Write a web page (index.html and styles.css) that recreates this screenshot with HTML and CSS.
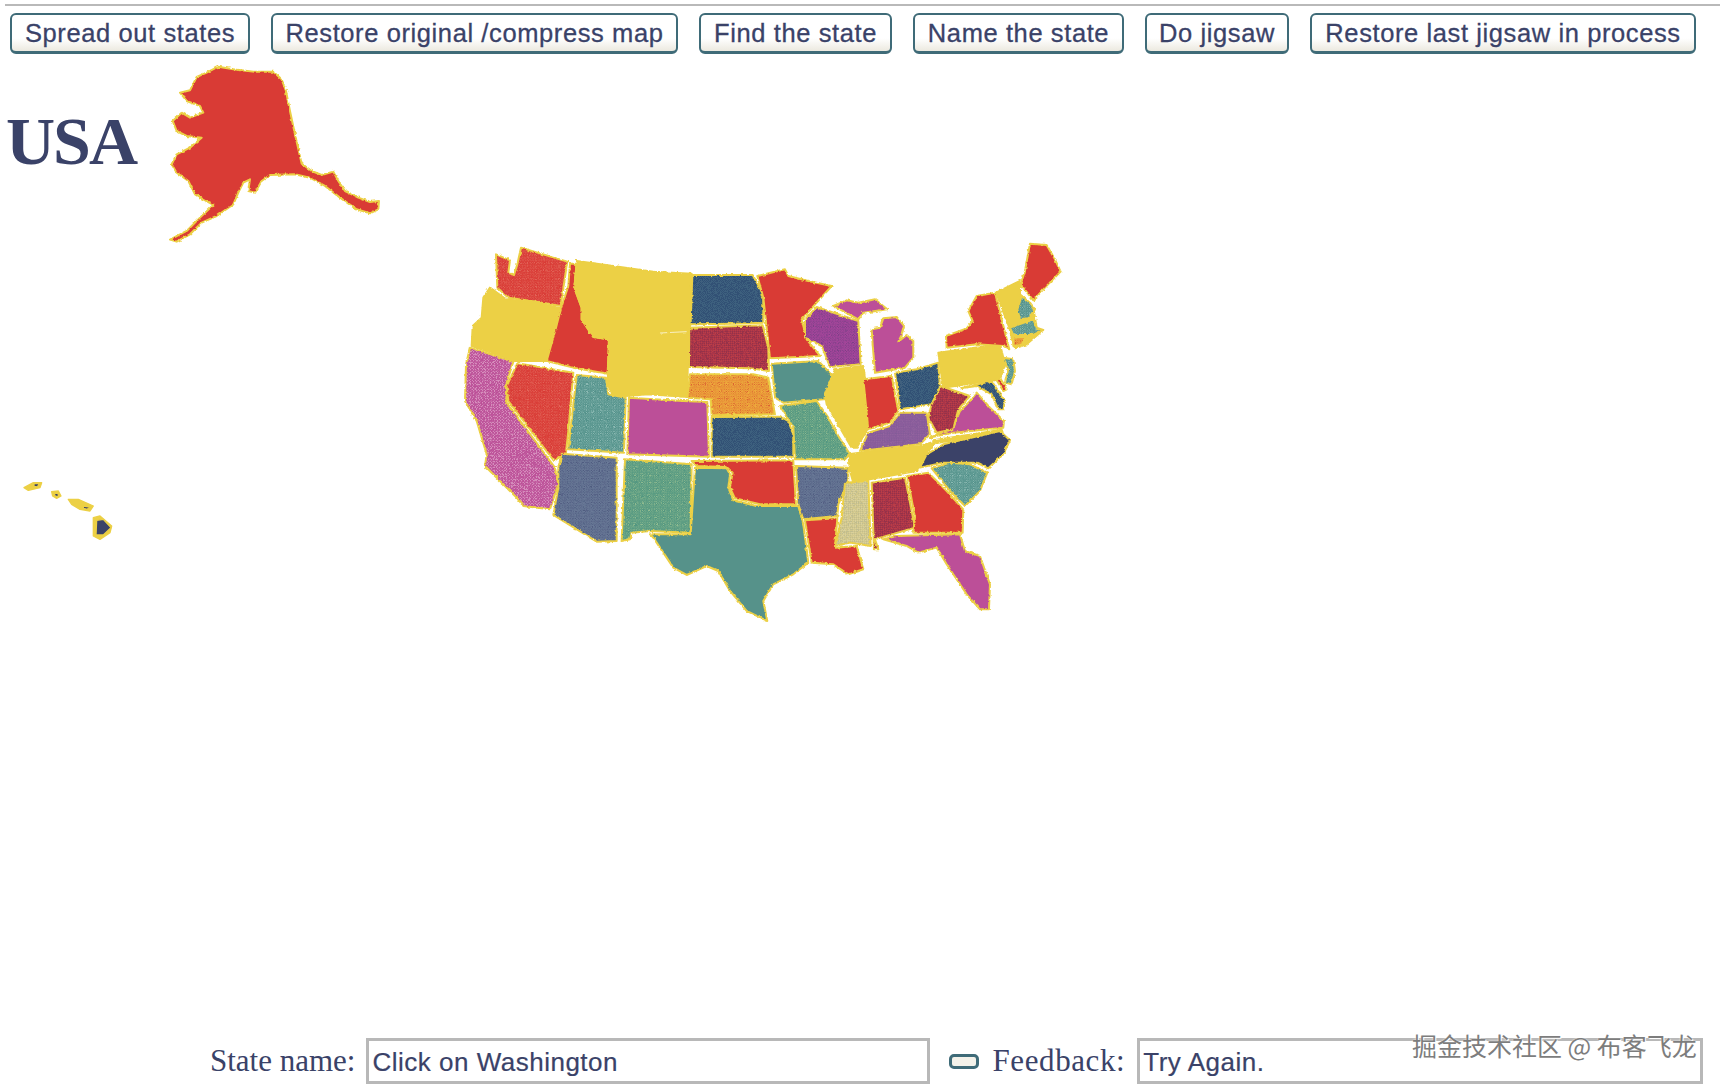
FILE: index.html
```html
<!DOCTYPE html>
<html lang="en">
<head>
    <meta charset="UTF-8">
    <meta name="viewport" content="width=device-width, initial-scale=1.0">
    <title>USA Map Game</title>
    <link rel="stylesheet" href="styles.css">
</head>
<body>
    <div class="page">
        <hr class="top-rule">

        <!-- Game buttons -->
        <div class="toolbar">
            <button class="btn btn-spread">Spread out states</button>
            <button class="btn btn-restore">Restore original /compress map</button>
            <button class="btn btn-find">Find the state</button>
            <button class="btn btn-name">Name the state</button>
            <button class="btn btn-jigsaw">Do jigsaw</button>
            <button class="btn btn-last">Restore last jigsaw in process</button>
        </div>

        <!-- Map canvas: the viewBox uses page coordinates -->
        <div class="stage">
            <h1 class="title">USA</h1>
            <svg class="map" viewBox="0 60 1725 975" width="1725" height="975">
                <defs>
                    <filter id="rough">
                        <feTurbulence type="fractalNoise" baseFrequency="0.1" numOctaves="2" seed="4"/>
                        <feDisplacementMap in="SourceGraphic" scale="9" xChannelSelector="R" yChannelSelector="G"/>
                    </filter>
                    <pattern id="dot-red" width="8" height="8" patternUnits="userSpaceOnUse">
                        <rect width="8" height="8" fill="#d93a35"/>
                        <circle cx="2" cy="2" r="1.3" fill="#f2a890"/><circle cx="6" cy="6" r="1.3" fill="#f2a890"/>
                    </pattern>
                    <pattern id="dot-magenta" width="9" height="9" patternUnits="userSpaceOnUse">
                        <rect width="9" height="9" fill="#bc5098"/>
                        <circle cx="2" cy="2" r="1.5" fill="#f4d2e6"/><circle cx="6.5" cy="6.5" r="1.5" fill="#f4d2e6"/>
                    </pattern>
                    <pattern id="dot-teal" width="7" height="7" patternUnits="userSpaceOnUse">
                        <rect width="7" height="7" fill="#4f8f88"/>
                        <circle cx="2" cy="2" r="1.3" fill="#b5d6cf"/><circle cx="5.5" cy="5.5" r="1.3" fill="#b5d6cf"/>
                    </pattern>
                    <pattern id="dot-blue" width="6" height="6" patternUnits="userSpaceOnUse">
                        <rect width="6" height="6" fill="#2f5075"/>
                        <circle cx="1.5" cy="1.5" r="1.1" fill="#6d9296"/><circle cx="4.5" cy="4.5" r="1.1" fill="#6d9296"/>
                    </pattern>
                    <pattern id="dot-darkred" width="6" height="6" patternUnits="userSpaceOnUse">
                        <rect width="6" height="6" fill="#a93448"/>
                        <circle cx="1.5" cy="1.5" r="1.2" fill="#7a2c4c"/><circle cx="4.5" cy="4.5" r="1.2" fill="#d24a45"/>
                    </pattern>
                    <pattern id="dot-orange" width="7" height="7" patternUnits="userSpaceOnUse">
                        <rect width="7" height="7" fill="#f0b23c"/>
                        <circle cx="2" cy="2" r="1.6" fill="#d8502f"/><circle cx="5.5" cy="5.5" r="1.6" fill="#d8502f"/>
                    </pattern>
                    <pattern id="dot-slate" width="8" height="8" patternUnits="userSpaceOnUse">
                        <rect width="8" height="8" fill="#6a7a98"/>
                        <circle cx="2" cy="2" r="1.5" fill="#37406a"/><circle cx="6" cy="6" r="1.5" fill="#37406a"/>
                    </pattern>
                    <pattern id="dot-green" width="7" height="7" patternUnits="userSpaceOnUse">
                        <rect width="7" height="7" fill="#4f9580"/>
                        <circle cx="2" cy="2" r="1.3" fill="#b9d39a"/><circle cx="5.5" cy="5.5" r="1.3" fill="#b9d39a"/>
                    </pattern>
                    <pattern id="dot-purple" width="8" height="8" patternUnits="userSpaceOnUse">
                        <rect width="8" height="8" fill="#a8459c"/>
                        <circle cx="2" cy="2" r="1.4" fill="#4a3a70"/><circle cx="6" cy="6" r="1.4" fill="#4a3a70"/>
                    </pattern>
                    <pattern id="dot-violet" width="7" height="7" patternUnits="userSpaceOnUse">
                        <rect width="7" height="7" fill="#8a5b9b"/>
                        <circle cx="2" cy="2" r="1.1" fill="#b58fb2"/><circle cx="5.5" cy="5.5" r="1.1" fill="#6f5f90"/>
                    </pattern>
                    <pattern id="dot-beige" width="6" height="6" patternUnits="userSpaceOnUse">
                        <rect width="6" height="6" fill="#d2c88c"/>
                        <circle cx="1.5" cy="1.5" r="1.1" fill="#8f9d98"/><circle cx="4.5" cy="4.5" r="1.1" fill="#f0ead0"/>
                    </pattern>
                </defs>

                <!-- Alaska -->
                <g class="states" transform="scale(.3333)" filter="url(#rough)">
                    <path class="red" d="M655 197L700 205L760 212L820 212L845 235L858 270L870 330L885 400L905 488L935 510L965 522L1000 512L1015 540L1035 570L1075 590L1110 603L1137 600L1135 625L1110 637L1070 625L1020 590L975 555L930 530L885 520L810 522L785 540L765 575L745 570L750 535L730 545L715 575L700 610L650 645L605 665L570 700L530 722L510 716L560 690L600 650L640 612L610 595L585 580L565 540L530 515L515 490L530 460L570 440L605 410L560 405L530 390L518 360L545 335L570 350L610 335L600 315L560 300L540 275L570 268L590 228L620 215Z"/>
                </g>

                <!-- Hawaii -->
                <g class="states hawaii" transform="translate(0 460) scale(.3333)">
                    <path class="yellow" d="M72 80L100 65L125 65L120 80L85 88Z"/>
                    <path class="navy" d="M102 68L118 68L112 78L102 76Z"/>
                    <path class="yellow" d="M155 92L175 90L183 105L170 112L158 105Z"/>
                    <path class="navy" d="M162 97L174 97L176 106L166 106Z"/>
                    <path class="yellow" d="M205 115L235 115L280 135L270 150L240 145L215 130Z"/>
                    <path class="navy" d="M250 135L270 138L262 145L250 142Z"/>
                    <path class="yellow" d="M280 170L300 165L335 195L330 215L300 235L280 225Z"/>
                    <path class="navy" d="M290 178L310 175L333 200L310 222L288 222Z"/>
                </g>

                <!-- Western states -->
                <g class="states" transform="translate(440 230) scale(.3333)" filter="url(#rough)">
                    <path fill="url(#dot-red)" d="M168 70L210 88L205 125L222 132L232 100L243 50L382 92L362 225L290 212L205 200L172 170Z"/>
                    <path class="yellow" d="M150 170L198 205L290 215L362 232L345 290L320 390L225 390L95 345L98 285L125 260L130 200Z"/>
                    <path class="red" d="M390 98L410 98L403 170L425 230L425 265L460 318L507 325L503 428L400 410L320 390L348 290L362 235L385 165Z"/>
                    <path class="yellow" d="M410 90L520 105L640 122L755 128L750 300L745 300L742 498L625 490L560 495L520 495L503 460L507 325L460 318L425 265L425 230L403 170Z"/>
                    <path class="seam" d="M660 306L740 302"/>
                    <path fill="url(#dot-blue)" d="M757 132L938 132L970 190L970 275L880 278L752 280Z"/>
                    <path fill="url(#dot-darkred)" d="M748 290L900 285L968 283L985 350L987 420L930 412L850 410L747 408Z"/>
                    <path fill="url(#dot-orange)" d="M750 430L940 430L985 440L1005 550L815 553L812 505L742 500Z"/>
                    <path fill="url(#dot-blue)" d="M815 558L1020 557L1045 570L1060 610L1060 677L815 677Z"/>
                    <path class="magenta" d="M567 500L730 510L802 513L807 677L562 670Z"/>
                    <path fill="url(#dot-teal)" d="M410 432L498 440L505 490L557 500L552 665L385 655Z"/>
                    <path fill="url(#dot-red)" d="M232 397L400 425L385 600L378 665L342 690L205 510L200 465Z"/>
                    <path fill="url(#dot-magenta)" d="M90 350L220 392L197 465L200 515L345 710L355 760L330 835L250 825L225 795L135 705L140 670L110 570L75 510L78 400Z"/>
                    <path fill="url(#dot-slate)" d="M365 668L530 680L530 930L470 932L340 852L355 770L355 710Z"/>
                    <path fill="url(#dot-green)" d="M555 685L755 700L752 905L630 900L575 905L570 925L545 930Z"/>
                    <path class="teal" d="M765 710L860 712L870 730L865 770L880 808L950 825L1075 825L1090 880L1105 995L1060 1030L1000 1060L970 1110L982 1170L920 1140L870 1080L835 1020L800 1005L740 1032L700 1010L640 920L630 910L752 910Z"/>
                    <path class="red" d="M755 690L1060 688L1068 820L960 820L885 802L870 770L878 725L860 708L770 705Z"/>
                </g>

                <!-- Eastern states -->
                <g class="states" transform="translate(750 230) scale(.3333)" filter="url(#rough)">
                    <path class="red" d="M22 135L105 115L115 135L175 150L245 165L200 215L155 265L170 325L210 375L60 382L40 200Z"/>
                    <path fill="url(#dot-purple)" d="M200 228L325 270L332 400L240 408L215 345L165 320L165 265Z"/>
                    <path class="magenta" d="M250 225L290 208L325 215L375 205L412 235L340 245L325 265Z"/>
                    <path class="magenta" d="M400 262L440 258L462 285L455 312L445 332L470 312L490 330L490 380L465 410L375 425L368 340L365 295L390 290Z"/>
                    <path class="teal" d="M65 398L205 390L248 435L230 480L222 505L100 515L75 500Z"/>
                    <path class="yellow" d="M255 415L340 405L345 440L340 480L355 590L320 650L305 650L270 590L230 520L225 490Z"/>
                    <path class="red" d="M340 445L425 435L445 540L420 575L355 595Z"/>
                    <path fill="url(#dot-blue)" d="M435 425L500 415L565 395L570 470L545 520L450 535Z"/>
                    <path fill="url(#dot-violet)" d="M450 545L530 545L540 610L510 640L415 650L330 660L355 605L420 585Z"/>
                    <path class="yellow" d="M295 670L410 655L510 645L560 630L520 680L500 720L360 745L310 755L300 720Z"/>
                    <path class="yellow" d="M550 628L755 596L758 604L560 636Z"/>
                    <path fill="url(#dot-green)" d="M90 525L200 510L235 560L265 615L300 670L285 685L135 685L130 590Z"/>
                    <path fill="url(#dot-slate)" d="M138 705L295 710L295 750L265 820L262 855L160 865L145 820Z"/>
                    <path class="red" d="M165 868L262 862L255 950L320 945L340 1015L295 1030L250 1000L185 995Z"/>
                    <path fill="url(#dot-beige)" d="M285 755L355 750L362 945L300 935L255 945L275 860Z"/>
                    <path fill="url(#dot-darkred)" d="M365 755L465 740L495 890L375 925L385 955L372 955Z"/>
                    <path class="red" d="M472 735L535 725L590 780L640 835L638 905L490 905L495 860Z"/>
                    <path fill="url(#dot-teal)" d="M545 712L600 695L660 700L712 725L690 780L645 825L600 780Z"/>
                    <path class="navy" d="M510 710L530 670L580 640L750 600L780 628L760 670L715 712L680 695L580 695Z"/>
                    <path class="magenta" d="M400 925L440 915L630 910L645 960L690 975L720 1060L717 1135L690 1135L650 1090L590 1000L560 950L505 965L470 945Z"/>
                    <path class="magenta" d="M680 485L720 530L762 570L760 590L610 605L540 620L610 590L630 540L660 510Z"/>
                    <path fill="url(#dot-darkred)" d="M572 465L660 495L625 535L610 595L560 605L535 560L545 520Z"/>
                    <path class="yellow" d="M565 365L750 340L765 400L750 445L580 470Z"/>
                    <path class="red" d="M590 350L588 315L650 292L668 270L655 240L680 195L735 185L778 355L760 345L680 340Z"/>
                    <path fill="url(#dot-blue)" d="M632 472L725 450L765 510L760 535L745 535L725 490L680 465Z"/>
                    <path fill="url(#dot-teal)" d="M760 380L790 385L795 420L785 460L765 455L775 415Z"/>
                    <path class="red" d="M740 448L750 440L770 475L760 480Z"/>
                    <path class="yellow" d="M738 185L810 150L810 190L850 230L860 290L870 305L830 340L795 352L785 318L778 290Z"/>
                    <path class="red" d="M840 38L890 42L915 85L932 122L885 170L850 208L812 160L825 120Z"/>
                    <path fill="url(#dot-teal)" d="M780 290L850 265L860 290L880 297L850 312L790 312Z"/>
                    <path fill="url(#dot-teal)" d="M815 195L840 215L855 235L835 262L810 265L802 235Z"/>
                    <path fill="url(#dot-orange)" d="M790 320L828 318L815 342L790 345Z"/>
                    <path class="magenta" d="M838 318L852 318L845 326Z"/>
                </g>
            </svg>
        </div>

        <!-- Answer row -->
        <div class="answer-row">
            <label class="field-label" for="state-name">State name:</label>
            <input class="field field-state" id="state-name" type="text" value="Click on Washington">
            <button class="btn-small" aria-label="Submit"></button>
            <label class="field-label label-feedback" for="feedback">Feedback:</label>
            <input class="field field-feedback" id="feedback" type="text" value="Try Again.">
        </div>

        <div class="watermark">掘金技术社区 @ 布客飞龙</div>
    </div>
</body>
</html>
```

FILE: styles.css
```css
/* Page frame */
body {
    margin: 0;
    background: #fff;
    color: #3a4268;
}

.page {
    position: relative;
    width: 1725px;
    height: 1089px;
    overflow: hidden;
    display: flex;
    flex-direction: column;
}

.top-rule {
    height: 2px;
    margin: 4px 5px 0;
    border: none;
    background: #b9b9b9;
}

/* Buttons */
.toolbar {
    display: flex;
    gap: 21px;
    margin: 7px 0 0 10px;
}

.btn {
    height: 41px;
    padding: 0;
    border: 2px solid #3f6b78;
    border-bottom-width: 3px;
    border-radius: 6px;
    background: linear-gradient(#fff 65%, #ece9df);
    color: #3a4268;
    font-family: "Liberation Sans", sans-serif;
    font-size: 25.5px;
    letter-spacing: 0.6px;
    -webkit-text-stroke: 0.3px #3a4268;
}

.btn-spread { width: 240px; }
.btn-restore { width: 407px; }
.btn-find { width: 193px; }
.btn-name { width: 211px; }
.btn-jigsaw { width: 144px; }
.btn-last { width: 386px; }

/* Map */
.stage {
    position: relative;
    height: 975px;
    margin-top: 7px;
    flex: none;
}

.map {
    display: block;
}

.title {
    position: absolute;
    left: 6px;
    top: 40px;
    margin: 0;
    font-family: "Liberation Serif", serif;
    font-size: 68px;
    font-weight: bold;
    letter-spacing: -2px;
    line-height: 80px;
    color: #3a4268;
}

.states path {
    stroke: #ecd045;
    stroke-width: 6;
    stroke-linejoin: round;
}

.states .seam {
    fill: none;
    stroke: #fff;
    stroke-width: 2;
}

.hawaii path {
    stroke-width: 4;
}

.red { fill: #d93a35; }
.yellow { fill: #ecd045; }
.teal { fill: #57928a; }
.magenta { fill: #bc5098; }
.navy { fill: #3a4268; }

/* Answer row */
.answer-row {
    display: flex;
    align-items: center;
    margin-top: 2px;
    padding-left: 210px;
    height: 46px;
}

.field-label {
    font-family: "Liberation Serif", serif;
    font-size: 31px;
    color: #3a4268;
}

.label-feedback {
    letter-spacing: 0.6px;
}

.field {
    box-sizing: border-box;
    height: 46px;
    padding: 2px 3px 0;
    border: 3px solid #b8b8b8;
    background: #fff;
    color: #3a4268;
    font-family: "Liberation Sans", sans-serif;
    font-size: 26px;
    letter-spacing: 0.5px;
    -webkit-text-stroke: 0.2px #3a4268;
}

.field-state {
    width: 564px;
    margin-left: 11px;
}

.field-feedback {
    width: 566px;
    margin-left: 12px;
}

.btn-small {
    width: 30px;
    height: 15px;
    margin: 0 13px 0 19px;
    padding: 0;
    border: 3px solid #3f6b78;
    border-radius: 5px;
    background: #f4f2ea;
}

/* Watermark on top of the feedback box */
.watermark {
    position: absolute;
    left: 1412px;
    top: 1029px;
    font-family: "Noto Sans CJK SC", sans-serif;
    font-size: 25px;
    line-height: 32px;
    color: #7d7d7d;
    text-shadow: 0 0 2px #fff, 1px 1px 0 #fff;
    white-space: nowrap;
}
```
